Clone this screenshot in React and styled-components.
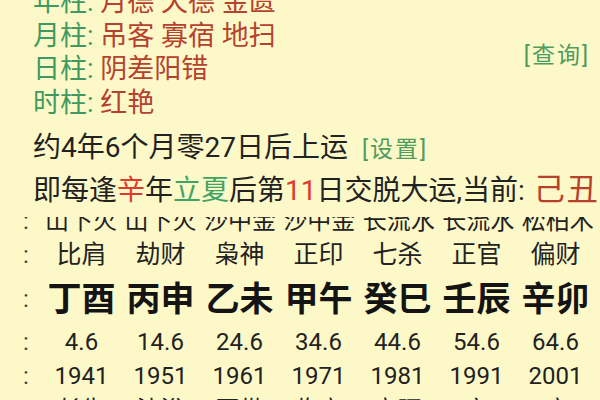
import React from 'react';
import styled, { createGlobalStyle } from 'styled-components';

const GlobalStyle = createGlobalStyle`
  html, body {
    margin: 0;
    padding: 0;
    background: #fcf8c8;
    overflow: hidden;
  }
  body {
    font-family: Roboto, "Noto Sans CJK SC", sans-serif;
    color: #222;
  }
`;

const Page = styled.div`
  width: 600px;
  height: 400px;
  overflow: hidden;
  background: #fcf8c8;
`;

const Header = styled.div`
  display: flex;
  align-items: center;
  margin-top: -14px;
  padding-left: 33px;
  padding-right: 10px;
`;

const ShenshaList = styled.div`
  display: flex;
  flex-direction: column;
`;

const ShenshaLine = styled.div`
  font-size: 27px;
  line-height: 33.5px;
  white-space: nowrap;
`;

const Label = styled.span`
  color: #3f9a62;
`;

const Value = styled.span`
  color: #b5412f;
`;

const LinkText = styled.span`
  color: #4f9c5e;
  font-size: 23px;
  letter-spacing: 2px;
  margin-left: ${p => p.$gap || 0}px;
`;

const QueryLink = styled(LinkText)`
  margin-left: auto;
`;

const InfoLine = styled.div`
  padding-left: 33px;
  font-size: 28px;
  line-height: 40px;
  white-space: nowrap;
  margin-top: ${p => p.$top || 0}px;
`;

const Mark = styled.span`
  color: ${p => (p.$tone === 'green' ? '#3fa463' : '#dc3b2e')};
`;

const Current = styled.span`
  color: #b83f2c;
  font-size: 31px;
  letter-spacing: 2px;
  margin-left: 2px;
`;

const Grid = styled.div`
  display: grid;
  grid-template-columns: 42px repeat(7, 79px);
  align-items: center;
  height: ${p => p.$h}px;
  margin-top: ${p => p.$top || 0}px;
  font-size: ${p => p.$size}px;
  font-weight: ${p => (p.$bold ? 700 : 400)};
  color: ${p => (p.$bold ? '#141414' : '#222')};
  line-height: ${p => p.$h}px;
`;

const Colon = styled.div`
  padding-left: 23px;
  font-size: 24px;
  font-weight: 400;
  color: #444;
`;

const Cell = styled.div`
  text-align: center;
  white-space: nowrap;
`;

const NayinRow = styled.div`
  display: flex;
  align-items: flex-end;
  height: 16px;
  margin-top: 6px;
  overflow: hidden;
  white-space: nowrap;
`;

const NayinColon = styled.div`
  width: 45px;
  flex: none;
  padding-left: 23px;
  box-sizing: border-box;
  font-size: 24px;
  line-height: 24px;
  color: #444;
`;

const NayinText = styled.div`
  font-size: 24px;
  line-height: 24px;
  word-spacing: 1.5px;
  color: #222;
`;

const shensha = [
  ['年柱', '月德 天德 金匮'],
  ['月柱', '吊客 寡宿 地扫'],
  ['日柱', '阴差阳错'],
  ['时柱', '红艳'],
];

const shishen = ['比肩', '劫财', '枭神', '正印', '七杀', '正官', '偏财'];
const pillars = ['丁酉', '丙申', '乙未', '甲午', '癸巳', '壬辰', '辛卯'];
const ages = ['4.6', '14.6', '24.6', '34.6', '44.6', '54.6', '64.6'];
const years = ['1941', '1951', '1961', '1971', '1981', '1991', '2001'];
const stages = ['长生', '沐浴', '冠带', '临官', '帝旺', '衰', '病'];

const Row = ({ items, ...rest }) => (
  <Grid {...rest}>
    <Colon>:</Colon>
    {items.map((t, i) => (
      <Cell key={i}>{t}</Cell>
    ))}
  </Grid>
);

const App = () => {
  return (
    <Page>
      <GlobalStyle />
      <Header>
        <ShenshaList>
          {shensha.map(([k, v]) => (
            <ShenshaLine key={k}>
              <Label>{k}: </Label>
              <Value>{v}</Value>
            </ShenshaLine>
          ))}
        </ShenshaList>
        <QueryLink>[查询]</QueryLink>
      </Header>

      <InfoLine $top={8}>
        约4年6个月零27日后上运
        <LinkText $gap={14}>[设置]</LinkText>
      </InfoLine>
      <InfoLine>
        即每逢<Mark>辛</Mark>年<Mark $tone="green">立夏</Mark>后第<Mark>11</Mark>日交脱大运,当前: <Current>己丑</Current>
      </InfoLine>

      <NayinRow>
        <NayinColon>:</NayinColon>
        <NayinText>山下火 山下火 沙中金 沙中金 长流水 长流水 松柏木</NayinText>
      </NayinRow>

      <Row items={shishen} $h={36} $top={4} $size={25} />
      <Row items={pillars} $h={52} $size={34} $bold />
      <Row items={ages} $h={34} $size={24} />
      <Row items={years} $h={34} $size={24} />
      <Row items={stages} $h={34} $size={24} />
    </Page>
  );
};

export default App;
